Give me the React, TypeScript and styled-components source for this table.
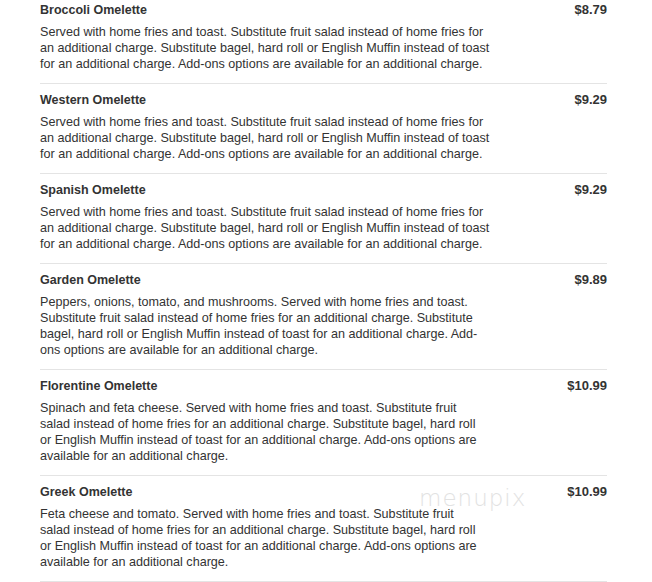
import * as React from 'react';
import styled, { createGlobalStyle } from 'styled-components';

const GlobalStyle = createGlobalStyle`
  body {
    margin: 0;
    background-color: #fff;
    font-family: 'Liberation Sans', Arial, sans-serif;
  }
`;

const MenuPage = styled.div`
  position: relative;
  width: 567px;
  padding: 0 0 0 40px;
`;

const MenuItem = styled.div<{ $first?: boolean }>`
  padding: ${({ $first }) => ($first ? '2px' : '8px')} 0 11px;
  border-bottom: 1px solid #e4e4e4;
`;

const ItemHeader = styled.div`
  display: flex;
  justify-content: space-between;
  align-items: center;
  height: 16px;
`;

const ItemName = styled.h3`
  margin: 0;
  font-size: 12.5px;
  line-height: 16px;
  font-weight: bold;
  color: #333;
`;

const ItemPrice = styled.span`
  font-size: 13px;
  line-height: 16px;
  font-weight: bold;
  color: #333;
`;

const ItemDescription = styled.p`
  margin: 6px 0 0;
  font-size: 12.6px;
  line-height: 16px;
  color: #333;
`;

const DescriptionLine = styled.span`
  display: block;
  white-space: nowrap;
`;

const Watermark = styled.div`
  position: absolute;
  left: 419px;
  top: 485px;
  font-family: 'DejaVu Sans', sans-serif;
  font-weight: 200;
  font-size: 23px;
  letter-spacing: 1px;
  color: #e2e2e2;
  pointer-events: none;
`;

// lines broken the way the printed menu breaks them
const standardLines = [
  'Served with home fries and toast. Substitute fruit salad instead of home fries for',
  'an additional charge. Substitute bagel, hard roll or English Muffin instead of toast',
  'for an additional charge. Add-ons options are available for an additional charge.',
];

const fillingLines = [
  'salad instead of home fries for an additional charge. Substitute bagel, hard roll',
  'or English Muffin instead of toast for an additional charge. Add-ons options are',
  'available for an additional charge.',
];

const items = [
  { id: 1, name: 'Broccoli Omelette', price: '$8.79', lines: standardLines },
  { id: 2, name: 'Western Omelette', price: '$9.29', lines: standardLines },
  { id: 3, name: 'Spanish Omelette', price: '$9.29', lines: standardLines },
  {
    id: 4,
    name: 'Garden Omelette',
    price: '$9.89',
    lines: [
      'Peppers, onions, tomato, and mushrooms. Served with home fries and toast.',
      'Substitute fruit salad instead of home fries for an additional charge. Substitute',
      'bagel, hard roll or English Muffin instead of toast for an additional charge. Add-',
      'ons options are available for an additional charge.',
    ],
  },
  {
    id: 5,
    name: 'Florentine Omelette',
    price: '$10.99',
    lines: ['Spinach and feta cheese. Served with home fries and toast. Substitute fruit', ...fillingLines],
  },
  {
    id: 6,
    name: 'Greek Omelette',
    price: '$10.99',
    lines: ['Feta cheese and tomato. Served with home fries and toast. Substitute fruit', ...fillingLines],
  },
];

const App = () => {
  return (
    <>
      <GlobalStyle />
      <MenuPage>
        {items.map(({ id, name, price, lines }, i) => (
          <MenuItem key={id} $first={i === 0}>
            <ItemHeader>
              <ItemName>{name}</ItemName>
              <ItemPrice>{price}</ItemPrice>
            </ItemHeader>
            <ItemDescription>
              {lines.map((line, j) => (
                <DescriptionLine key={j}>{line}</DescriptionLine>
              ))}
            </ItemDescription>
          </MenuItem>
        ))}
        <Watermark>menupix</Watermark>
      </MenuPage>
    </>
  );
};

export default App;
